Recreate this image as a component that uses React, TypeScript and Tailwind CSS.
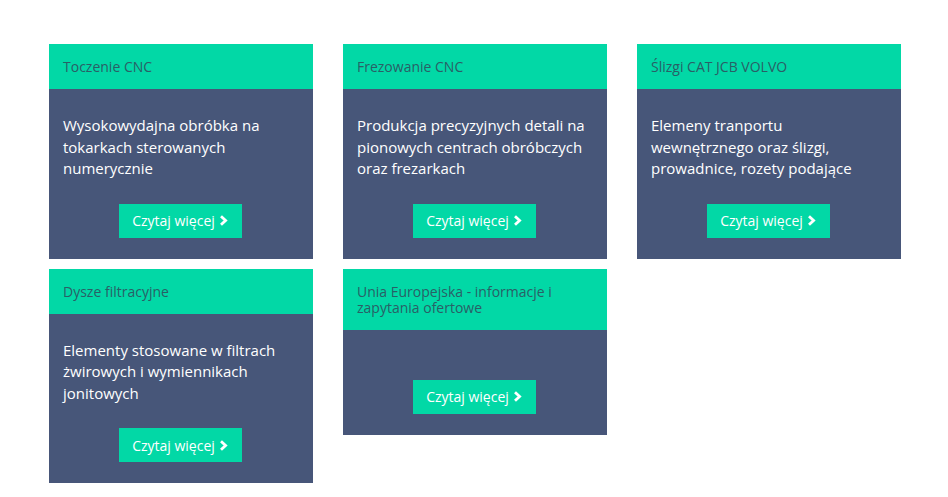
import React from 'react';

interface CardProps {
  title: string;
  text: string;
}

const cards: CardProps[] = [
  { title: 'Toczenie CNC', text: 'Wysokowydajna obróbka na tokarkach sterowanych numerycznie' },
  { title: 'Frezowanie CNC', text: 'Produkcja precyzyjnych detali na pionowych centrach obróbczych oraz frezarkach' },
  { title: 'Ślizgi CAT JCB VOLVO', text: 'Elemeny tranportu wewnętrznego oraz ślizgi, prowadnice, rozety podające' },
  { title: 'Dysze filtracyjne', text: 'Elementy stosowane w filtrach żwirowych i wymiennikach jonitowych' },
  { title: 'Unia Europejska - informacje i zapytania ofertowe', text: '' },
];

// bold chevron like the old font-awesome one
const Chevron = () => (
  <svg width="9" height="11" viewBox="0 0 9 11" className="shrink-0">
    <path d="M2 1.2 L6.6 5.5 L2 9.8" fill="none" stroke="white" strokeWidth="2.8" strokeLinejoin="miter" />
  </svg>
);

const Card: React.FC<CardProps> = ({ title, text }) => {
  return (
    <div className="flex flex-col">
      {/* header */}
      <div className="bg-[#02d8a6] px-[14px] pt-[15px] pb-[14px] text-[14px] leading-[16px] text-[#2a5f66]">
        {title}
      </div>
      {/* body */}
      <div className="bg-[#475679] px-[14px] pt-[26px] pb-[21px] flex flex-col">
        <p className="text-[15px] leading-[21.5px] text-white">{text}</p>
        <div className="flex justify-center mt-6">
          <button className="bg-[#02d8a6] h-[34px] w-[123px] -translate-x-[1px] flex items-center justify-center gap-[4px] text-[14px] text-white">
            Czytaj więcej
            <Chevron />
          </button>
        </div>
      </div>
    </div>
  );
};

export default function App() {
  return (
    <div className="w-[948px] h-[497px] bg-white" style={{ fontFamily: '"Open Sans", sans-serif' }}>
      <div className="grid grid-cols-[264px_264px_264px] gap-x-[30px] gap-y-[10px] items-start pl-[49px] pt-[44px]">
        {cards.map((c) => (
          <Card key={c.title} {...c} />
        ))}
      </div>
    </div>
  );
}
